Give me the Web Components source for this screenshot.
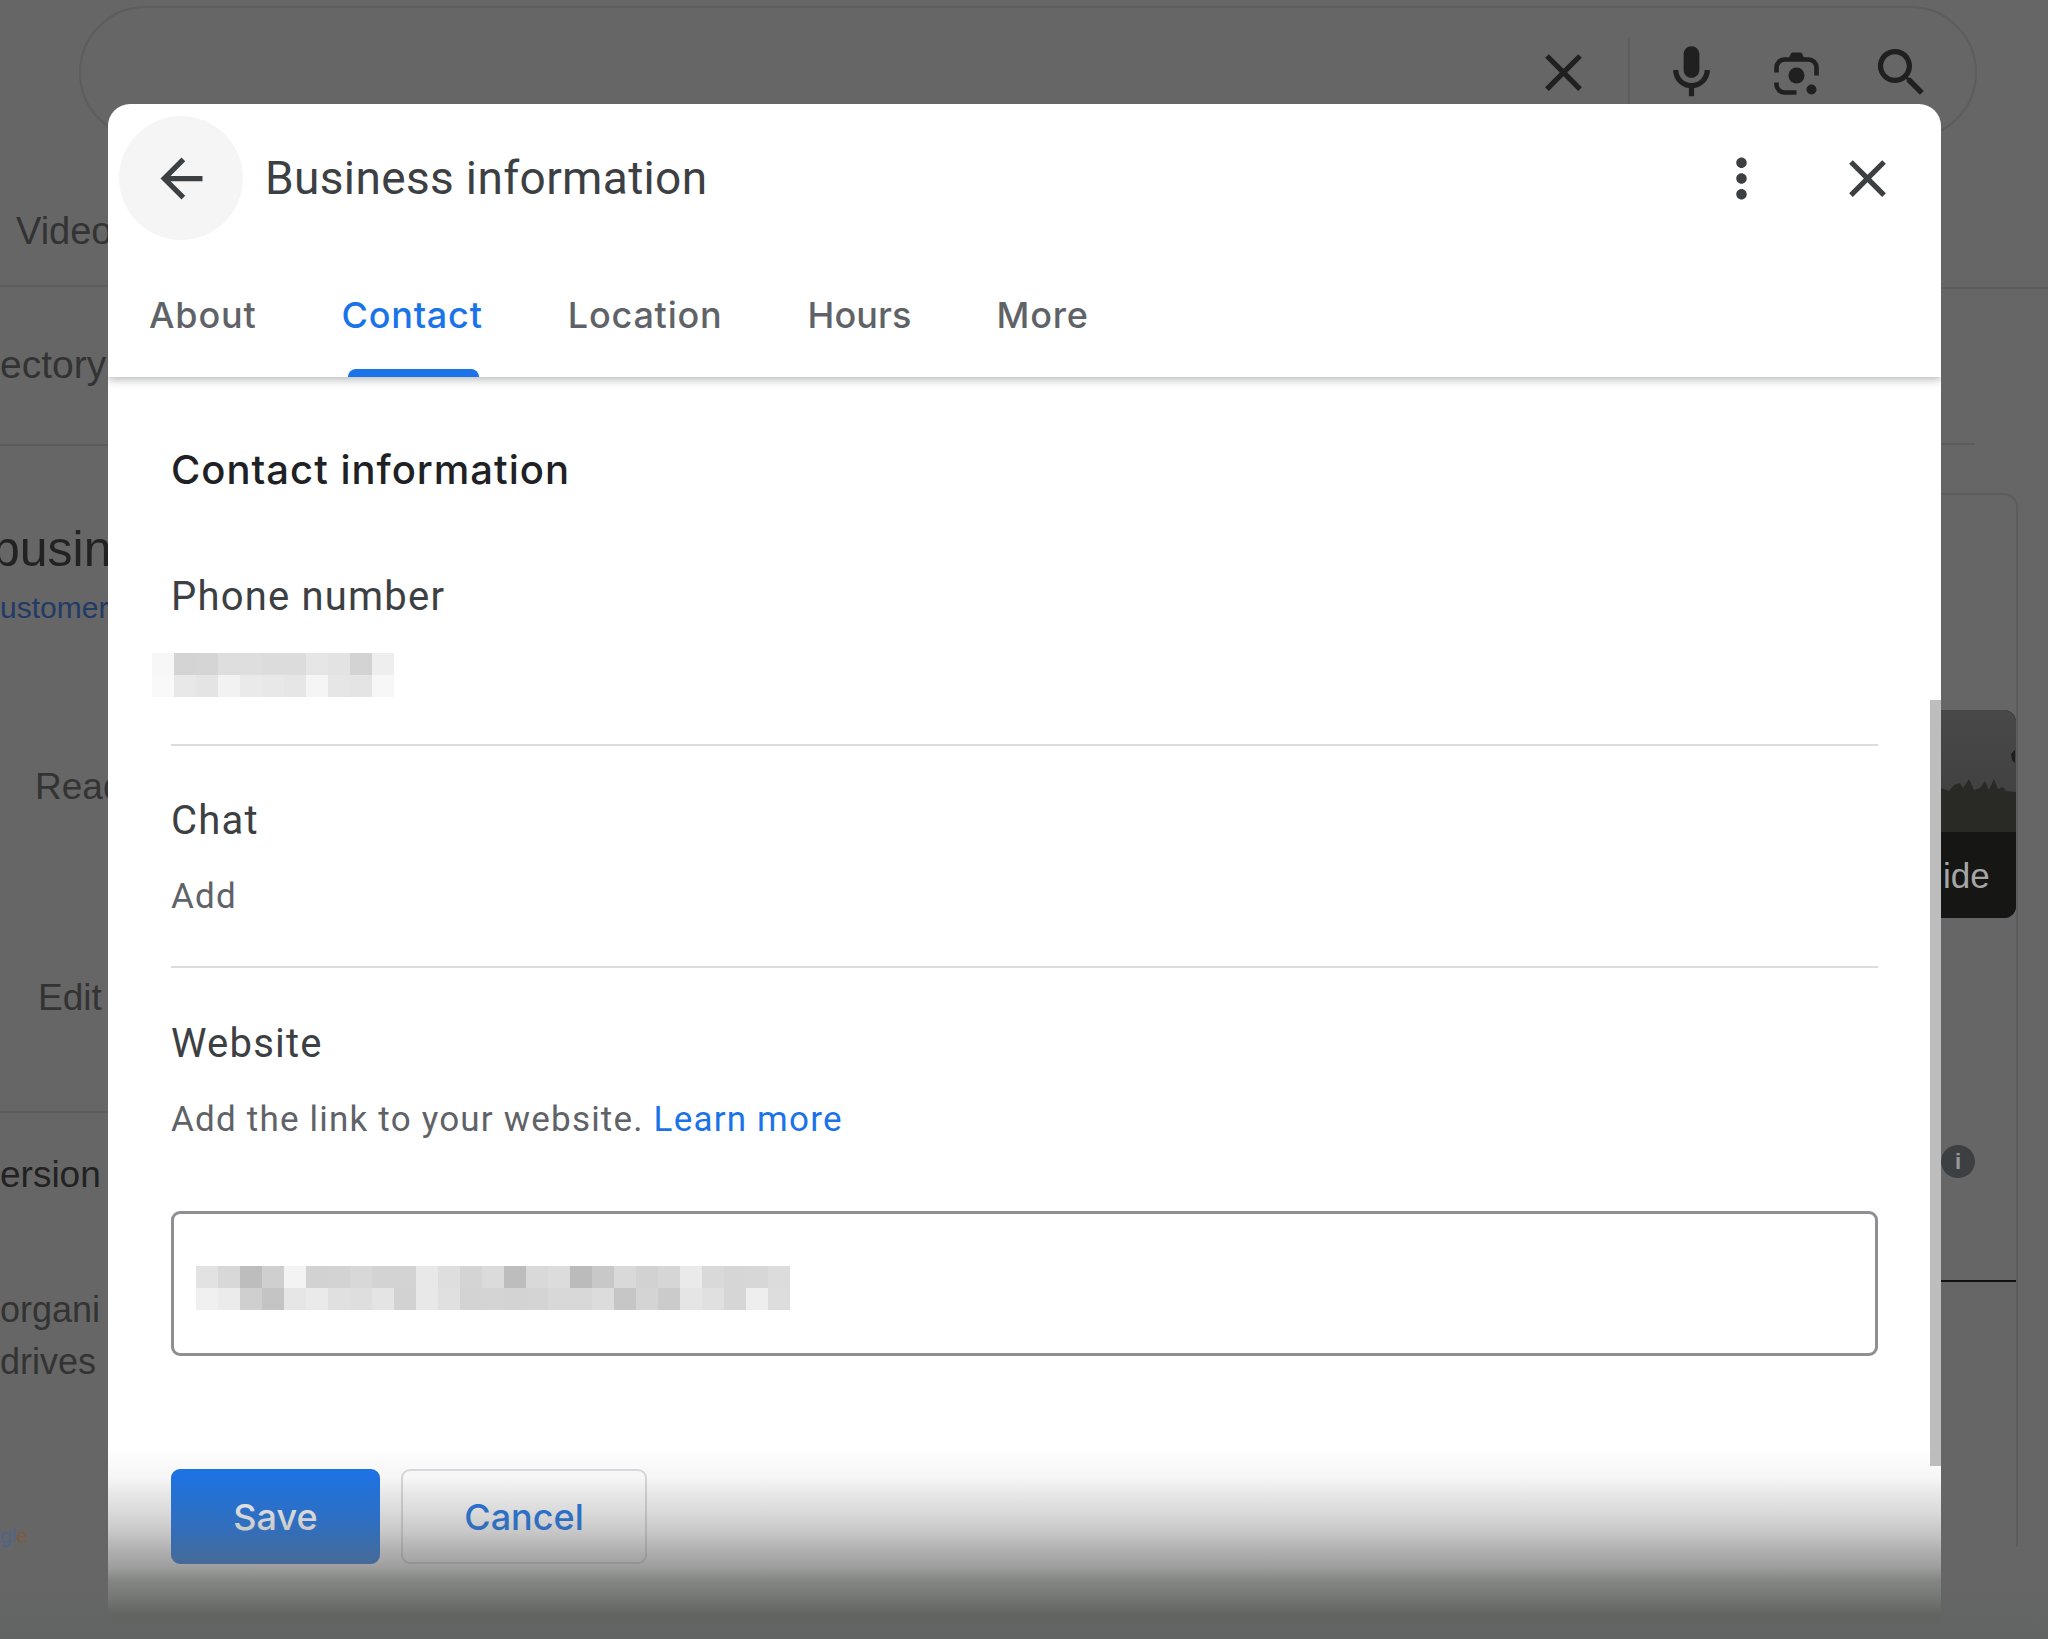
<!DOCTYPE html>
<html lang="en">
<head>
<meta charset="utf-8">
<title>Business information</title>
<style>
  html, body { margin: 0; padding: 0; background: #666; }
  body { width: 2048px; height: 1639px; overflow: hidden; font-family: Roboto, "Liberation Sans", sans-serif; }
</style>
</head>
<body>
<backdrop-page>
  <search-bar slot="top"></search-bar>
  <backdrop-left slot="left"></backdrop-left>
  <backdrop-right slot="right"></backdrop-right>
</backdrop-page>

<info-dialog heading="Business information">
  <dialog-tabs selected="Contact" tabs="About,Contact,Location,Hours,More"></dialog-tabs>
  <h2 slot="body" class="title">Contact information</h2>
  <info-section slot="body" label="Phone number" first>
    <pixel-blur cols="11" offset="-19" bottom="47"
      rows="f7 d4 d5 de de dc dc e6 e3 d3 ee|f9 e8 e4 f2 ea e8 e6 f5 e6 e4 f7"></pixel-blur>
  </info-section>
  <info-section slot="body" label="Chat">
    <section-text>Add</section-text>
  </info-section>
  <info-section slot="body" label="Website" last>
    <section-text>Add the link to your website. <a>Learn more</a></section-text>
    <url-field>
      <pixel-blur cols="27"
        rows="e2 d8 bd cf f3 d2 d3 d8 d3 d3 e8 de d4 db bd d9 dc bb c8 d9 d2 d6 ea d9 d6 d7 dc|f0 eb cf c4 e6 ea e0 de e4 d2 e8 e0 d3 d4 d3 d4 d8 d8 dc c6 d4 cb e5 e0 d6 ee dd"></pixel-blur>
    </url-field>
  </info-section>
  <dialog-button slot="footer" variant="primary" style="width:209px">Save</dialog-button>
  <dialog-button slot="footer" style="width:246px">Cancel</dialog-button>
</info-dialog>

<script>
const ICONS = {
  close: 'M19 6.41L17.59 5 12 10.59 6.41 5 5 6.41 10.59 12 5 17.59 6.41 19 12 13.41 17.59 19 19 17.59 13.41 12 19 6.41z',
  back: 'M20 11H7.83l5.59-5.59L12 4l-8 8 8 8 1.41-1.41L7.83 13H20v-2z',
  dots: 'M12 8c1.1 0 2-.9 2-2s-.9-2-2-2-2 .9-2 2 .9 2 2 2zm0 2c-1.1 0-2 .9-2 2s.9 2 2 2 2-.9 2-2-.9-2-2-2zm0 6c-1.1 0-2 .9-2 2s.9 2 2 2 2-.9 2-2-.9-2-2-2z',
  mic: 'M12 14c1.66 0 3-1.34 3-3V5c0-1.66-1.34-3-3-3S9 3.34 9 5v6c0 1.66 1.34 3 3 3z M17 11c0 2.76-2.24 5-5 5s-5-2.24-5-5H5c0 3.53 2.61 6.43 6 6.92V21h2v-3.08c3.39-.49 6-3.39 6-6.92h-2z',
  search: 'M15.5 14h-.79l-.28-.27A6.471 6.471 0 0 0 16 9.5 6.5 6.5 0 1 0 9.5 16c1.61 0 3.09-.59 4.23-1.57l.27.28v.79l5 4.99L20.49 19l-4.99-5zm-6 0C7.01 14 5 11.99 5 9.5S7.01 5 9.5 5 14 7.01 14 9.5 11.99 14 9.5 14z'
};

class GIcon extends HTMLElement {
  connectedCallback() {
    const name = this.getAttribute('name');
    const lens = `<g fill="none" stroke="currentColor" stroke-width="4.6">
        <path d="M4 24V19a8 8 0 0 1 8-8h24a8 8 0 0 1 8 8v8"/>
        <path d="M4 34v2a8 8 0 0 0 8 8h12"/></g>
      <path d="M15 12l3.5-7q.6-1 1.5-1h8q.9 0 1.5 1l3.5 7z" fill="currentColor"/>
      <circle cx="24" cy="27" r="8" fill="currentColor"/><circle cx="39" cy="41" r="5" fill="currentColor"/>`;
    this.attachShadow({ mode: 'open' }).innerHTML = `
      <style>
        :host { display: inline-flex; width: 63px; height: 63px; flex: none; color: inherit; }
        svg { width: 100%; height: 100%; display: block; }
      </style>
      ${name === 'lens'
        ? `<svg viewBox="-7.5 -7.5 63 63">${lens}</svg>`
        : `<svg viewBox="0 0 24 24" fill="currentColor"><path d="${ICONS[name]}"/></svg>`}`;
  }
}
customElements.define('g-icon', GIcon);

class BackdropPage extends HTMLElement {
  constructor() {
    super();
    this.attachShadow({ mode: 'open' }).innerHTML = `
      <style>
        :host { display: flex; flex-direction: column; width: 2048px; height: 1639px; color: #333;
          background: linear-gradient(#666 96%, #626463 100%); }
        .cols { flex: 1; display: grid; grid-template-columns: 108px 1fr 107px; min-height: 0; }
      </style>
      <slot name="top"></slot>
      <div class="cols"><slot name="left"></slot><div></div><slot name="right"></slot></div>`;
  }
}
customElements.define('backdrop-page', BackdropPage);

class SearchBar extends HTMLElement {
  constructor() {
    super();
    this.attachShadow({ mode: 'open' }).innerHTML = `
      <style>
        :host { display: flex; align-items: center; justify-content: flex-end; box-sizing: border-box; flex: none;
          width: 1898px; height: 133px; margin: 6px 0 0 79px; padding-right: 42px;
          border: 2px solid #5d5d5d; border-radius: 67px; color: #202020; }
        .sep { width: 2px; height: 72px; background: #5d5d5d; margin: 0 30px 0 33px; }
      </style>
      <g-icon name="close"></g-icon><div class="sep"></div>
      <g-icon name="mic"></g-icon><g-icon name="lens" style="margin-left:42px"></g-icon><g-icon name="search" style="margin-left:42px"></g-icon>`;
  }
}
customElements.define('search-bar', SearchBar);

class BackdropLeft extends HTMLElement {
  constructor() {
    super();
    this.attachShadow({ mode: 'open' }).innerHTML = `
      <style>
        :host { display: block; overflow: hidden; white-space: nowrap; font: 38px/50px "Liberation Sans", Arial, sans-serif; color: #333; }
        .line { height: 2px; background: #5c5c5c; }
        div { height: 50px; }
        .customer { color: #223a66; font-size: 30px; }
        .large { font-size: 50px; color: #222; line-height: 60px; height: 60px; }
        .ver { font-size: 37px; color: #222; }
        .google { font-size: 21px; line-height: 30px; height: 30px; color: #4f6488; }
        .google b { font-weight: 400; color: #7a5c3e; }
      </style>
      <div style="margin:67px 0 0 16px">Video</div>
      <div class="line" style="margin-top:29px"></div>
      <div style="margin-top:53px;font-size:39px">ectory</div>
      <div class="line" style="margin-top:54px"></div>
      <div class="large" style="margin:73px 0 0 -8px">busin</div>
      <div class="customer" style="margin-top:4px">ustomer</div>
      <div style="margin:129px 0 0 35px;font-size:37px">Read</div>
      <div style="margin:161px 0 0 38px;font-size:37px">Edit</div>
      <div class="line" style="margin-top:88px"></div>
      <div class="ver" style="margin-top:37px">ersion</div>
      <div style="margin-top:85px;font-size:36px">organi</div>
      <div style="margin-top:2px;font-size:36px">drives</div>
      <div class="google" style="margin-top:134px">gl<b>e</b></div>`;
  }
}
customElements.define('backdrop-left', BackdropLeft);

class BackdropRight extends HTMLElement {
  constructor() {
    super();
    this.attachShadow({ mode: 'open' }).innerHTML = `
      <style>
        :host { display: block; font-family: "Liberation Sans", Arial, sans-serif; }
        .line { height: 2px; background: #5c5c5c; }
        .card { box-sizing: border-box; width: 77px; height: 1054px; margin-top: 48px; padding-top: 215px;
          border: solid #5c5c5c; border-width: 2px 2px 0 0; border-radius: 0 14px 0 0; }
        .thumb { position: relative; box-sizing: border-box; height: 208px; width: 75px; padding: 146px 0 0 2px;
          border-radius: 0 12px 12px 0; overflow: hidden; background: #161614;
          color: #a6a6a6; font-size: 35px; line-height: 40px; }
        .thumb svg { position: absolute; left: 0; top: 0; width: 75px; height: 208px; }
        .thumb span { position: relative; }
        .info { width: 34px; height: 33px; margin-top: 227px; border-radius: 50%; background: #3c4043; color: #999;
          font: 700 22px/33px "Liberation Sans", sans-serif; text-align: center; }
        .rule { height: 2px; background: #111; margin-top: 102px; }
      </style>
      <div class="line" style="margin-top:148px"></div>
      <div class="line" style="margin-top:154px;width:34px"></div>
      <div class="card">
        <div class="thumb">
          <svg viewBox="0 0 75 208" aria-hidden="true">
            <defs><linearGradient id="sky" x1="0" y1="0" x2="0" y2="1"><stop offset="0" stop-color="#484849"/><stop offset="1" stop-color="#414142"/></linearGradient></defs>
            <rect width="75" height="92" fill="url(#sky)"/>
            <path d="M0 78l8 3 5-6 6-2 3 5 6-9 5 11 6-2 5-7 4 9 5-11 4 10 5-2 3 4 10 1V124H0z" fill="#292925"/>
            <rect y="122" width="75" height="86" fill="#161614"/>
            <path d="M70 44l4-4v13l-3-3z" fill="#1d1d1f"/>
          </svg>
          <span>ide</span>
        </div>
        <div class="info">i</div>
        <div class="rule"></div>
      </div>`;
  }
}
customElements.define('backdrop-right', BackdropRight);

class InfoDialog extends HTMLElement {
  constructor() {
    super();
    this.attachShadow({ mode: 'open' }).innerHTML = `
      <style>
        :host { position: absolute; left: 108px; top: 104px; width: 1833px; height: 1519px; display: flex; flex-direction: column;
          background: #fff; border-radius: 22px 22px 0 0; overflow: hidden; color: #3c4043; }
        header { flex: none; display: flex; align-items: center; height: 148px; box-sizing: border-box; padding: 0 42px 0 11px; }
        .round { width: 124px; height: 124px; border-radius: 50%; background: #f5f5f5; display: flex; align-items: center; justify-content: center; flex: none; }
        h1 { flex: 1; margin: 0 0 0 22px; font: 400 46px/60px Roboto, sans-serif; color: #3c4043; letter-spacing: .36px; }
        .more { margin-right: 63px; }
        .top { flex: none; position: relative; z-index: 1; height: 125px; box-shadow: 0 3px 8px rgba(60,64,67,.35); clip-path: inset(0 0 -20px 0); }
        main { flex: 1; padding: 0 63px; min-height: 0; }
        footer { flex: none; height: 171px; box-sizing: border-box; padding: 17px 63px 0; display: flex; gap: 21px; align-items: flex-start; position: relative; }
        footer::after { content: ""; position: absolute; inset: 0; pointer-events: none;
          background: linear-gradient(rgba(98,100,98,.015) 0, rgba(98,100,98,.03) 6%, rgba(98,100,98,.06) 15%, rgba(98,100,98,.15) 24%, rgba(98,100,98,.23) 34%, rgba(98,100,98,.35) 46%, rgba(98,100,98,.53) 59%, rgba(98,100,98,.62) 67%, rgba(98,100,98,.78) 75%, rgba(98,100,98,.88) 85%, rgb(98,100,98) 95%); }
        .bar { position: absolute; right: 0; top: 596px; width: 11px; height: 766px; background: #bdbdbd; }
        ::slotted(h2) { margin: 63px 0 0; font: 500 40px/60px Inter, sans-serif; color: #202124; letter-spacing: 1px; }
      </style>
      <header>
        <div class="round"><g-icon name="back"></g-icon></div>
        <h1>${this.getAttribute('heading')}</h1>
        <g-icon class="more" name="dots"></g-icon>
        <g-icon name="close"></g-icon>
      </header>
      <div class="top"><slot></slot></div>
      <main><slot name="body"></slot></main>
      <footer><slot name="footer"></slot></footer>
      <div class="bar"></div>`;
  }
}
customElements.define('info-dialog', InfoDialog);

class DialogTabs extends HTMLElement {
  connectedCallback() {
    const sel = this.getAttribute('selected');
    const tabs = this.getAttribute('tabs').split(',');
    this.attachShadow({ mode: 'open' }).innerHTML = `
      <style>
        :host { display: flex; height: 125px; padding-left: 41px; gap: 85px; font: 500 36px/50px Inter, sans-serif; color: #5f6368; letter-spacing: .8px; }
        span { position: relative; padding-top: 38px; display: block; }
        span.short { letter-spacing: .1px; }
        span.on { color: #1a73e8; }
        span.on::after { content: ""; position: absolute; left: 7px; right: 4px; bottom: 0; height: 8px; background: #1a73e8; border-radius: 8px 8px 0 0; }
      </style>
      ${tabs.map(t => `<span class="${t === sel ? 'on' : ''} ${t === 'Hours' ? 'short' : ''}">${t}</span>`).join('')}`;
  }
}
customElements.define('dialog-tabs', DialogTabs);

class InfoSection extends HTMLElement {
  constructor() {
    super();
    this.attachShadow({ mode: 'open' }).innerHTML = `
      <style>
        :host { display: block; padding-top: 45px; border-bottom: 2px solid #dadce0; }
        :host([first]) { padding-top: 67px; }
        :host([last]) { border-bottom: 0; padding-top: 46px; }
        .label { height: 56px; font: 400 40px/59px Roboto, sans-serif; color: #3c4043; letter-spacing: 1.2px; }
      </style>
      <div class="label"></div>
      <slot></slot>`;
    this.shadowRoot.querySelector('.label').textContent = this.getAttribute('label');
  }
}
customElements.define('info-section', InfoSection);

class SectionText extends HTMLElement {
  constructor() {
    super();
    this.attachShadow({ mode: 'open' }).innerHTML = `
      <style>
        :host { display: block; margin: 25px 0 44px; font: 400 35px/50px Roboto, sans-serif; color: #5f6368; letter-spacing: 1.2px; }
        ::slotted(a) { color: #1a73e8; }
      </style>
      <slot></slot>`;
  }
}
customElements.define('section-text', SectionText);

class PixelBlur extends HTMLElement {
  connectedCallback() {
    const cols = +this.getAttribute('cols');
    const cells = this.getAttribute('rows').split('|')
      .flatMap(r => r.split(' ')).map(v => `<i style="background:#${v}${v}${v}"></i>`).join('');
    const off = this.getAttribute('offset') || 0;
    const bottom = this.getAttribute('bottom') || 0;
    this.attachShadow({ mode: 'open' }).innerHTML = `
      <style>
        :host { display: grid; grid-template-columns: repeat(${cols}, 22px); grid-auto-rows: 22px; width: max-content;
          margin: 30px 0 ${bottom}px ${off}px; }
        i { display: block; }
      </style>
      ${cells}`;
  }
}
customElements.define('pixel-blur', PixelBlur);

class UrlField extends HTMLElement {
  constructor() {
    super();
    this.attachShadow({ mode: 'open' }).innerHTML = `
      <style>
        /* margin-top collapses with the text's bottom margin */
        :host { display: flex; align-items: flex-start; box-sizing: border-box; height: 145px; margin-top: 66px; padding: 22px;
          border: 3px solid #8d8f92; border-radius: 9px; }
      </style>
      <slot></slot>`;
  }
}
customElements.define('url-field', UrlField);

class DialogButton extends HTMLElement {
  constructor() {
    super();
    this.attachShadow({ mode: 'open' }).innerHTML = `
      <style>
        :host { display: flex; align-items: center; justify-content: center; box-sizing: border-box; height: 95px;
          border: 2px solid #dadce0; border-radius: 9px; background: #fff; color: #1a73e8;
          font: 500 36px/1 Inter, sans-serif; }
        :host([variant=primary]) { background: #1a73e8; border-color: #1a73e8; color: #fff; }
      </style>
      <slot></slot>`;
  }
}
customElements.define('dialog-button', DialogButton);
</script>
</body>
</html>
